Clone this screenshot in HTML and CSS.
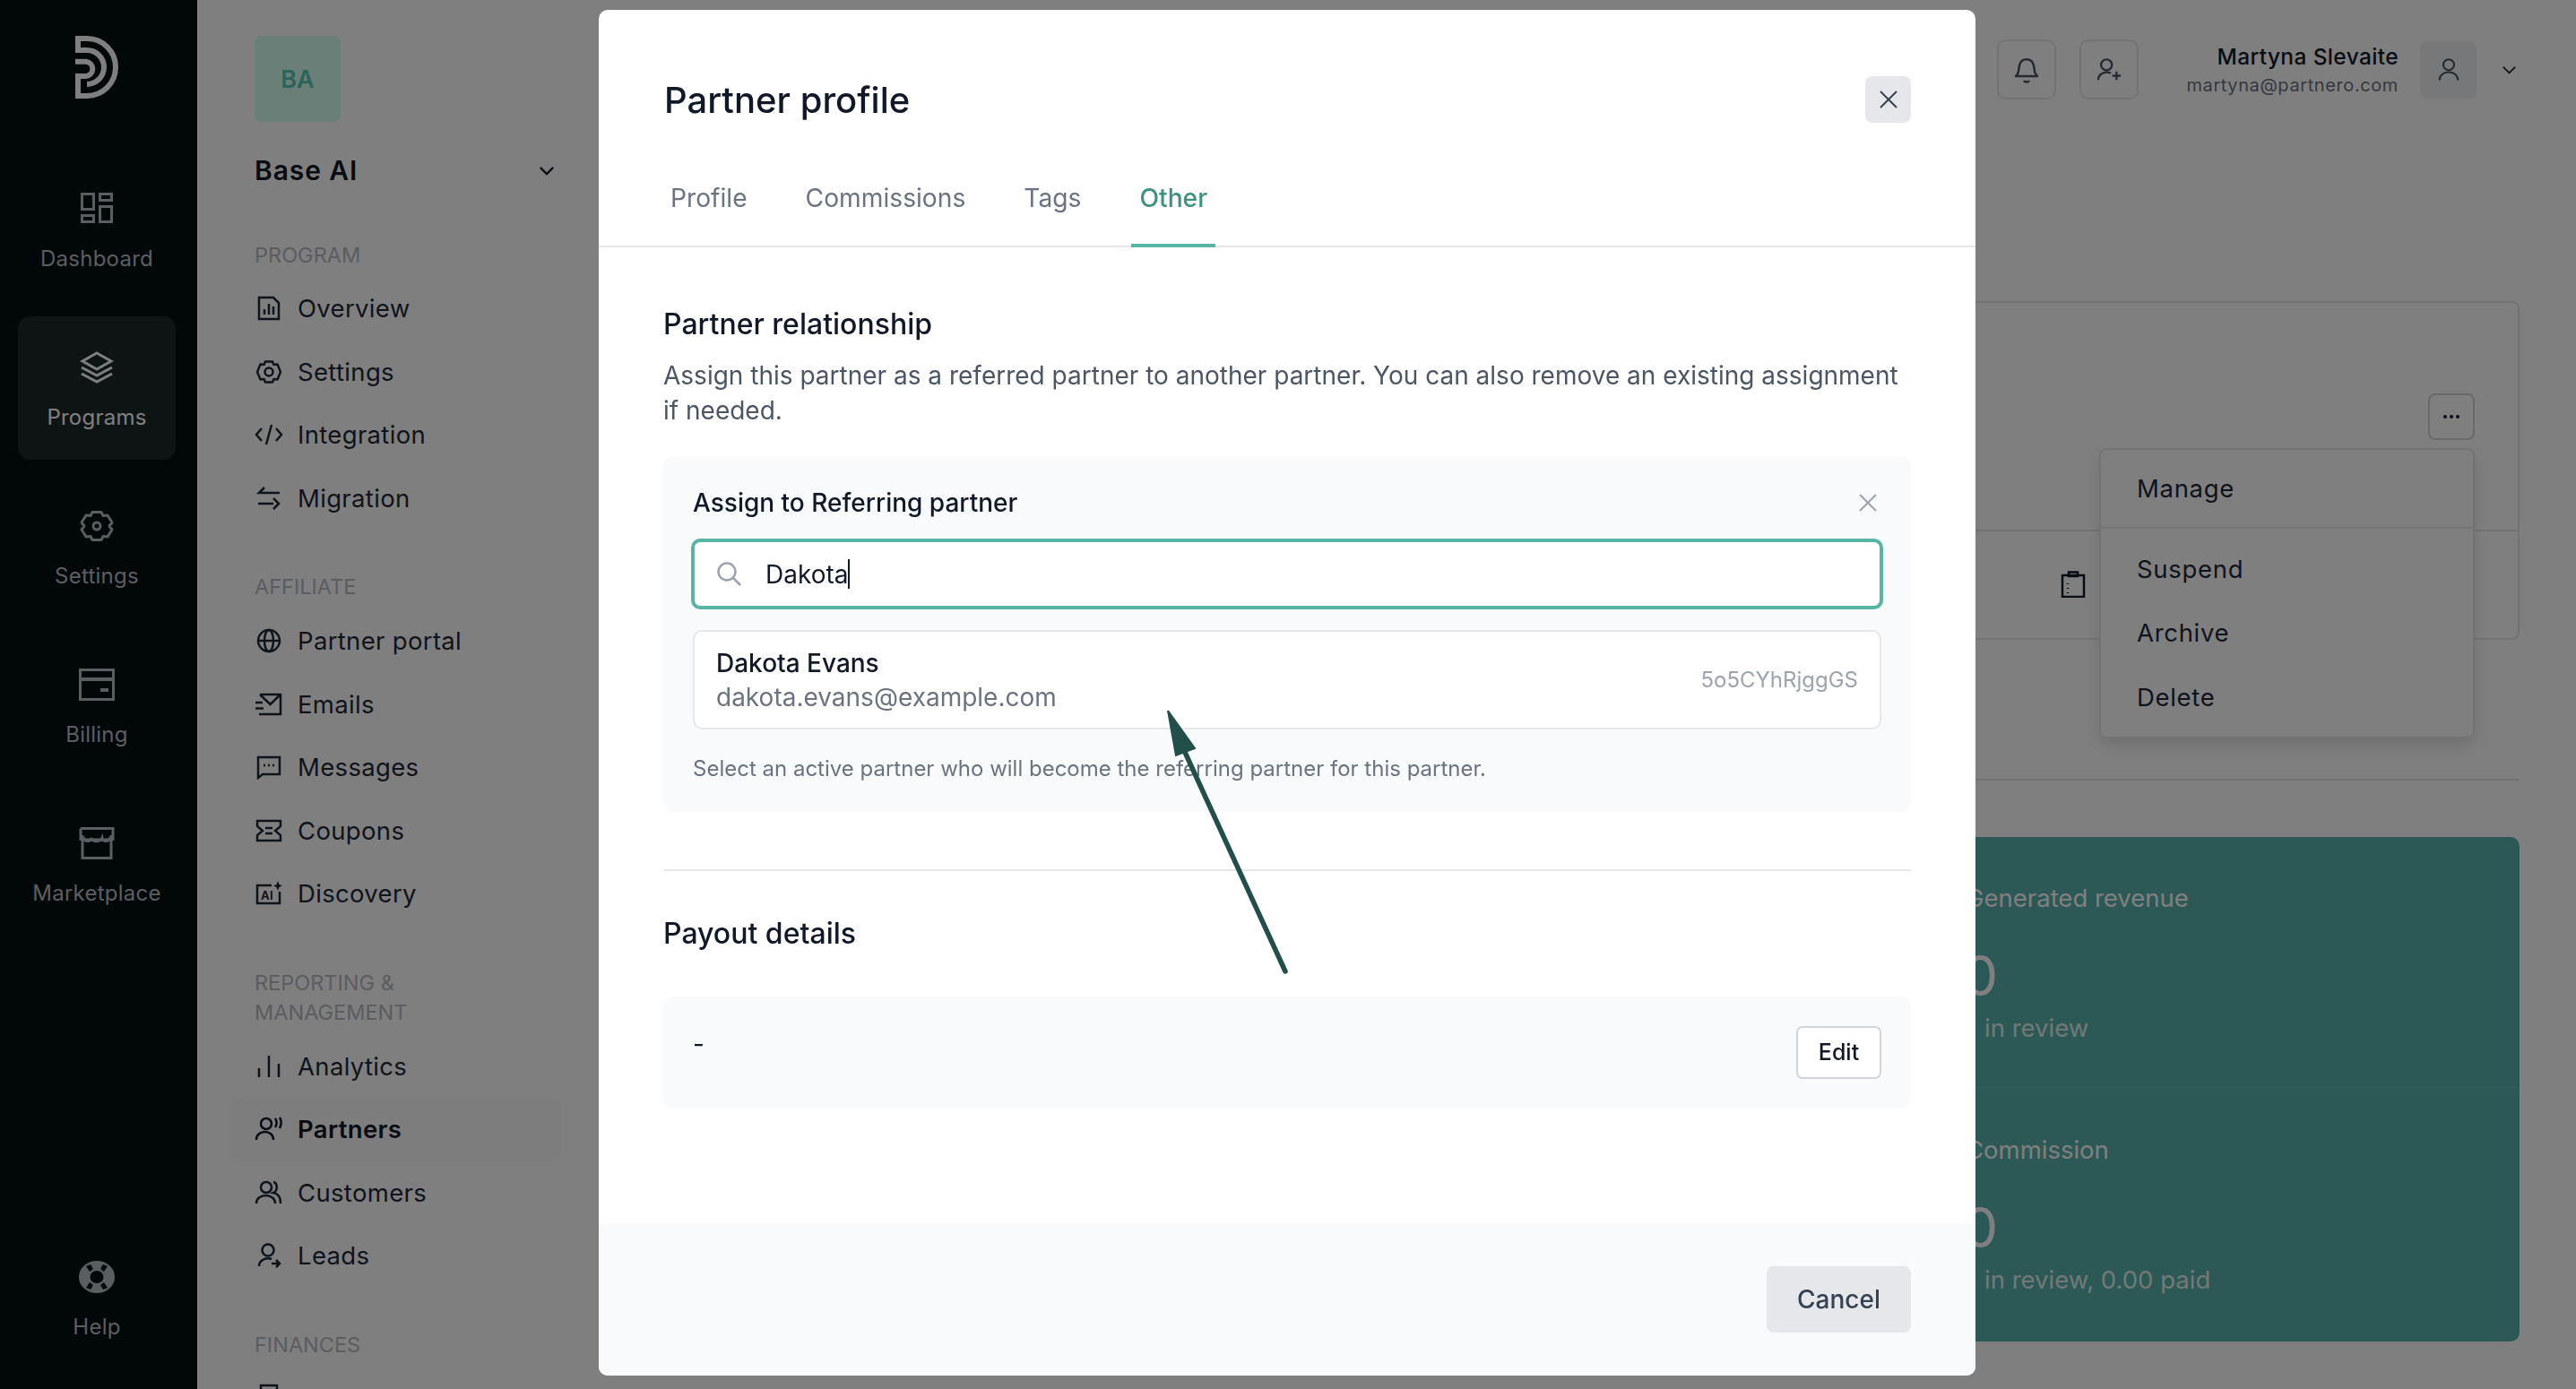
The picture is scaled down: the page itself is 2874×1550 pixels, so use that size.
FILE: index.html
```html
<!DOCTYPE html>
<html>
<head>
    <meta charset="utf-8">
    <title>Partner profile</title>
    <link rel="stylesheet" href="styles.css">
</head>
<body>
    <div class="app">
        <!-- dark icon rail -->
        <aside class="rail">
            <svg class="logo" viewBox="0 0 48 70" fill="none" stroke="currentColor" stroke-width="6">
                <path d="M13 54A19 19 0 0 0 13 16H3V3H13A32 32 0 0 1 13 67H3V45H12A8.200 8.200 0 0 0 12 28.700H0"/>
            </svg>
            <a class="rail-item">
                <svg viewBox="0 0 36 36" fill="none" stroke="currentColor" stroke-width="3"><rect x="1.5" y="1.5" width="13" height="17"/><rect x="21.5" y="1.5" width="13" height="7"/><rect x="1.5" y="25.5" width="13" height="7"/><rect x="21.5" y="15.5" width="13" height="17"/></svg>
                <span>Dashboard</span>
            </a>
            <a class="rail-item active">
                <svg viewBox="0 0 38 36" fill="none" stroke="currentColor" stroke-width="3"><path d="M19 2L35 11L19 20L3 11Z"/><path d="M2 18L19 27L36 18"/><path d="M2 25L19 34L36 25"/></svg>
                <span>Programs</span>
            </a>
            <a class="rail-item">
                <svg viewBox="0 0 38 36" fill="none" stroke="currentColor" stroke-width="3"><path d="M14 2.500H24L26 6.500L31 6L36 14L33 18L36 22L31 30L26 29.500L24 33.500H14L12 29.500L7 30L2 22L5 18L2 14L7 6L12 6.500Z" stroke-linejoin="round"/><circle cx="19" cy="18" r="4"/></svg>
                <span>Settings</span>
            </a>
            <a class="rail-item">
                <svg viewBox="0 0 40 36" fill="none" stroke="currentColor" stroke-width="3"><rect x="1.500" y="1.500" width="37" height="33"/><path d="M2 12H38" stroke-width="4"/><path d="M24 24H33" stroke-width="4"/></svg>
                <span>Billing</span>
            </a>
            <a class="rail-item">
                <svg viewBox="0 0 40 36" fill="none" stroke="currentColor" stroke-width="3"><path d="M2 1.500H38V15M2 1.500V15"/><path d="M4 34.500H36V14H4Z"/><path d="M5 11C6 17 13 17 14 12C15 17 24 17 26 12C27 17 34 17 35 11" stroke-width="3"/><path d="M4 9V15M36 9V15"/></svg>
                <span>Marketplace</span>
            </a>
            <a class="rail-item help">
                <svg viewBox="0 0 40 36" fill="currentColor"><ellipse cx="20" cy="18" rx="20" ry="18"/><ellipse cx="20" cy="18" rx="7.500" ry="7" fill="#050f11"/><path d="M8 6L13 4L16 9L12 12Z M32 6L27 4L24 9L28 12Z M8 30L13 32L16 27L12 24Z M32 30L27 32L24 27L28 24Z" fill="#050f11"/></svg>
                <span>Help</span>
            </a>
        </aside>

        <!-- program sub navigation -->
        <nav class="subnav">
            <div class="program-badge">BA</div>
            <div class="program-name">
                <span>Base AI</span>
                <svg viewBox="0 0 20 12" fill="none" stroke="currentColor" stroke-width="2.500"><path d="M2 2L10 10L18 2"/></svg>
            </div>

            <h4 class="nav-heading">PROGRAM</h4>
            <a class="nav-item"><svg viewBox="0 0 28 28" fill="none" stroke="currentColor" stroke-width="2.500"><path d="M3 2H19L25 8V26H3Z"/><path d="M9 21V15M14 21V9M19 21V12"/></svg>Overview</a>
            <a class="nav-item"><svg viewBox="0 0 28 28" fill="none" stroke="currentColor" stroke-width="2.500"><path d="M10 2.500H18L19.500 6L23.500 5.500L27 14L23.500 22.500L19.500 22L18 25.500H10L8.500 22L4.500 22.500L1 14L4.500 5.500L8.500 6Z" stroke-linejoin="round"/><circle cx="14" cy="14" r="4.500"/></svg>Settings</a>
            <a class="nav-item"><svg viewBox="0 0 32 28" fill="none" stroke="currentColor" stroke-width="2.500"><path d="M8 7L2 14L8 21M24 7L30 14L24 21M19 3L13 25"/></svg>Integration</a>
            <a class="nav-item"><svg viewBox="0 0 28 28" fill="none" stroke="currentColor" stroke-width="2.500"><path d="M9 2L3 8H26M19 20H2M19 14L25 20L19 26" /></svg>Migration</a>

            <h4 class="nav-heading second">AFFILIATE</h4>
            <a class="nav-item"><svg viewBox="0 0 28 28" fill="none" stroke="currentColor" stroke-width="2.500"><circle cx="14" cy="14" r="12"/><ellipse cx="14" cy="14" rx="5" ry="12"/><path d="M2 14H26"/></svg>Partner portal</a>
            <a class="nav-item"><svg viewBox="0 0 30 28" fill="none" stroke="currentColor" stroke-width="2.500"><path d="M5 3H28V25H4M5 3L16.500 14L28 3M0 12H8M0 18.500H9"/></svg>Emails</a>
            <a class="nav-item"><svg viewBox="0 0 28 28" fill="none" stroke="currentColor" stroke-width="2.500"><path d="M2 3H26V22H7L2 26Z"/><path d="M8 12H10M13 12H15M18 12H20"/></svg>Messages</a>
            <a class="nav-item"><svg viewBox="0 0 30 28" fill="none" stroke="currentColor" stroke-width="2.500"><path d="M2 3H28V9L22 14L28 19V25H2V19L8 14L2 9Z"/><path d="M11 11H19M11 17H19"/></svg>Coupons</a>
            <a class="nav-item"><svg viewBox="0 0 30 28" fill="none" stroke="currentColor" stroke-width="2.500"><path d="M18 5H2V25H27V12"/><text class="ai-mark" x="6" y="21">AI</text><path d="M25 0L26.500 4L30 5.500L26.500 7L25 11L23.500 7L20 5.500L23.500 4Z" fill="currentColor" stroke="none"/></svg>Discovery</a>

            <h4 class="nav-heading second">REPORTING &amp; MANAGEMENT</h4>
            <a class="nav-item"><svg viewBox="0 0 28 28" fill="none" stroke="currentColor" stroke-width="2.500"><path d="M3 26V16M14 26V2M25 26V11"/></svg>Analytics</a>
            <a class="nav-item current"><svg viewBox="0 0 30 28" fill="none" stroke="currentColor" stroke-width="2.500"><circle cx="12" cy="8" r="6"/><path d="M1 26C1 14 20 14 20 26"/><path d="M22 2C24 5 24 9 22 12M27 1C29 4 29 9 27 13"/></svg>Partners</a>
            <a class="nav-item"><svg viewBox="0 0 30 28" fill="none" stroke="currentColor" stroke-width="2.500"><circle cx="12" cy="8" r="6"/><path d="M1 26C1 14 22 14 22 26"/><path d="M20 2C25 3 25 12 20 14C26 15 28 20 28 26"/></svg>Customers</a>
            <a class="nav-item"><svg viewBox="0 0 28 28" fill="none" stroke="currentColor" stroke-width="2.500"><circle cx="13" cy="8" r="6.500"/><path d="M3 26C3 19 11 16 17 18M17 23H26M22 19L26 23L22 27"/></svg>Leads</a>

            <h4 class="nav-heading second">FINANCES</h4>
            <div class="nav-peek"><svg viewBox="0 0 28 28" fill="none" stroke="currentColor" stroke-width="2.500"><path d="M5 2H23V26H5Z"/></svg></div>
        </nav>

        <!-- page behind the modal -->
        <main class="main">
            <header class="topbar">
                <button class="icon-btn"><svg viewBox="0 0 28 30" fill="none" stroke="currentColor" stroke-width="2.500"><path d="M2 22H26C22 19 23 14 22 10C20 1 8 1 6 10C5 14 6 19 2 22Z" stroke-linejoin="round"/><path d="M11 27C12 29 16 29 17 27"/></svg></button>
                <button class="icon-btn"><svg viewBox="0 0 30 30" fill="none" stroke="currentColor" stroke-width="2.500"><circle cx="12" cy="9" r="6.500"/><path d="M2 27C2 19 12 16 17 19M19 22H29M24 17V27"/></svg></button>
                <div class="user">
                    <div class="user-name">Martyna Slevaite</div>
                    <div class="user-mail">martyna@partnero.com</div>
                </div>
                <div class="avatar"><svg viewBox="0 0 28 30" fill="none" stroke="currentColor" stroke-width="2.500"><circle cx="14" cy="9" r="7"/><path d="M2 29C2 15 26 15 26 29"/></svg></div>
                <svg class="chevron" viewBox="0 0 20 12" fill="none" stroke="currentColor" stroke-width="2"><path d="M2 2L10 10L18 2"/></svg>
            </header>

            <section class="card">
                <div class="card-top">
                    <button class="more-btn"><i></i><i></i><i></i></button>
                </div>
                <div class="card-foot">
                    <svg viewBox="0 0 28 30" fill="none" stroke="currentColor" stroke-width="2.500"><path d="M2 5H26V29H2Z"/><path d="M9 1.500H19V6H9Z"/><path d="M8 14V15M8 19V20M8 24V25"/></svg>
                </div>
                <div class="menu">
                    <a class="menu-item first">Manage</a>
                    <div class="menu-list">
                        <a class="menu-item">Suspend</a>
                        <a class="menu-item">Archive</a>
                        <a class="menu-item">Delete</a>
                    </div>
                </div>
            </section>

            <hr class="rule">

            <section class="stats">
                <div class="stat">
                    <div class="stat-label">Generated revenue</div>
                    <div class="stat-value">0.00</div>
                    <div class="stat-sub">0.00&nbsp; in review</div>
                </div>
                <div class="stat">
                    <div class="stat-label">Commission</div>
                    <div class="stat-value">0.00</div>
                    <div class="stat-sub">0.00&nbsp; in review, 0.00 paid</div>
                </div>
            </section>
        </main>
    </div>

    <div class="overlay"></div>

    <div class="modal">
        <div class="modal-head">
            <h2>Partner profile</h2>
            <button class="close-btn"><svg viewBox="0 0 20 20" fill="none" stroke="currentColor" stroke-width="2"><path d="M1 1L19 19M19 1L1 19"/></svg></button>
        </div>
        <div class="tabs">
            <a class="tab">Profile</a>
            <a class="tab">Commissions</a>
            <a class="tab">Tags</a>
            <a class="tab selected">Other</a>
        </div>
        <div class="modal-body">
            <h3>Partner relationship</h3>
            <p class="lead">Assign this partner as a referred partner to another partner. You can also remove an existing assignment if needed.</p>

            <div class="assign">
                <div class="assign-head">
                    <span>Assign to Referring partner</span>
                    <svg viewBox="0 0 20 20" fill="none" stroke="currentColor" stroke-width="2"><path d="M1 1L19 19M19 1L1 19"/></svg>
                </div>
                <div class="search">
                    <svg viewBox="0 0 28 27" fill="none" stroke="currentColor" stroke-width="2.500"><circle cx="12" cy="11" r="9.500"/><path d="M19 18L27 26"/></svg>
                    <span>Dakota</span><i class="caret"></i>
                </div>
                <div class="result">
                    <div>
                        <div class="result-name">Dakota Evans</div>
                        <div class="result-mail">dakota.evans@example.com</div>
                    </div>
                    <div class="result-id">5o5CYhRjggGS</div>
                </div>
                <p class="hint">Select an active partner who will become the referring partner for this partner.</p>
            </div>

            <hr class="modal-rule">

            <h3>Payout details</h3>
            <div class="payout">
                <span>-</span>
                <button class="edit-btn">Edit</button>
            </div>
        </div>
        <div class="modal-foot">
            <button class="cancel-btn">Cancel</button>
        </div>
    </div>

    <!-- annotation arrow drawn on top of the screenshot -->
    <svg class="arrow" viewBox="0 0 2874 1550" fill="none">
        <path d="M1434 1084L1320 835" stroke="#234f4b" stroke-width="5.500" stroke-linecap="round"/>
        <path d="M1303 793L1312 843L1333 835Z" fill="#234f4b" stroke="#234f4b" stroke-width="2"/>
    </svg>
</body>
</html>
```

FILE: styles.css
```css
* {
    box-sizing: border-box;
}

:root {
    --ink:      #111827;
    --nav-ink:  #1f2937;
    --grey:     #6b7280;
    --light:    #9ca3af;
    --line:     #e5e7eb;
    --soft:     #f9fafb;
    --teal:     #58b5a4;
}

html, body {
    margin: 0;
    height: 100%;
    overflow: hidden;
    font-family: "Inter", "Liberation Sans", sans-serif;
    color: var(--ink);
    background: #fff;
}

button {
    font-family: inherit;
    padding: 0;
    border: none;
}

h2, h3, h4, p {
    margin: 0;
    font-weight: 500;
}

.app {
    display: flex;
    height: 1550px;
}

/* rail */
.rail {
    width: 220px;
    flex: none;
    display: flex;
    flex-direction: column;
    align-items: center;
    padding: 40px 4px 0 0;
    background: #050f11;
    color: #b6bcc2;
}

.logo {
    width: 48px;
    height: 70px;
    margin-bottom: 66px;
    color: #fff;
}

.rail-item {
    width: 176px;
    height: 160px;
    margin-bottom: 17px;
    display: flex;
    flex-direction: column;
    align-items: center;
    gap: 23px;
    padding-top: 39px;
    border-radius: 14px;
    font-size: 24px;
    letter-spacing: 0.01em;
    line-height: 30px;
}

.rail-item svg {
    height: 36px;
    width: 40px;
}

.rail-item.active {
    background: #1d2829;
    color: #fff;
}

.rail-item.help {
    margin-top: auto;
    margin-bottom: 22px;
}

/* sub navigation */
.subnav {
    width: 440px;
    flex: none;
    padding: 40px 34px 0 64px;
    color: var(--nav-ink);
    overflow: hidden;
}

.program-badge {
    width: 96px;
    height: 96px;
    display: flex;
    align-items: center;
    justify-content: center;
    border-radius: 8px;
    background: #d4fff0;
    color: #58caae;
    font-size: 27px;
    font-weight: 600;
}

.program-name {
    display: flex;
    align-items: center;
    justify-content: space-between;
    margin-top: 32px;
    padding-right: 7px;
    font-size: 30px;
    font-weight: 600;
    letter-spacing: 0.03em;
    color: var(--ink);
    line-height: 44px;
}

.program-name svg {
    width: 18px;
    height: 11px;
}

.nav-heading {
    margin-top: 56px;
    margin-bottom: 8px;
    padding-right: 60px;
    font-size: 23.5px;
    line-height: 33px;
    font-weight: 400;
    color: #b6bac2;
}

.nav-heading.second {
    margin-top: 47px;
    margin-bottom: 9px;
}

.nav-item {
    display: flex;
    align-items: center;
    gap: 16px;
    height: 70.5px;
    margin-left: -24px;
    padding-left: 24px;
    font-size: 27.5px;
    letter-spacing: 0.012em;
    border-radius: 10px;
}

.nav-item svg,
.nav-peek svg {
    width: 32px;
    height: 28px;
    flex: none;
}

.nav-item.current {
    background: #fafafa;
    font-weight: 600;
    color: var(--ink);
}

.nav-peek {
    padding-top: 18px;
}

/* page behind modal */
.main {
    flex: 1;
    min-width: 0;
    padding: 44px 63px 0 40px;
}

.topbar {
    display: flex;
    align-items: center;
    justify-content: flex-end;
    height: 67px;
}

.icon-btn {
    width: 66px;
    height: 67px;
    margin-right: 26px;
    display: flex;
    align-items: center;
    justify-content: center;
    background: #fff;
    border: 2px solid var(--line);
    border-radius: 10px;
    color: #4b5563;
}

.icon-btn svg {
    width: 28px;
    height: 30px;
}

.user {
    margin-left: 27px;
    text-align: right;
}

.user-name {
    font-size: 24.5px;
    font-weight: 500;
    letter-spacing: 0.015em;
    line-height: 34px;
}

.user-mail {
    font-size: 20px;
    letter-spacing: 0.03em;
    line-height: 30px;
    color: var(--grey);
}

.avatar {
    width: 63px;
    height: 64px;
    margin-left: 24px;
    display: flex;
    align-items: center;
    justify-content: center;
    background: #eef0f2;
    border-radius: 8px;
    color: #4b5563;
}

.avatar svg {
    width: 24px;
    height: 27px;
}

.chevron {
    width: 17px;
    height: 10px;
    margin: 0 3px 0 28px;
    color: var(--ink);
}

.card {
    position: relative;
    height: 378px;
    margin-top: 225px;
    border: 2px solid var(--line);
    border-radius: 8px;
}

.card-top {
    height: 255px;
    padding: 101px 48px 0 0;
    display: flex;
    justify-content: flex-end;
    align-items: flex-start;
    border-bottom: 2px solid var(--line);
}

.more-btn {
    width: 52px;
    height: 52px;
    display: flex;
    align-items: center;
    justify-content: center;
    gap: 3px;
    background: #fff;
    border: 2px solid #d1d5db;
    border-radius: 8px;
}

.more-btn i {
    width: 4px;
    height: 4px;
    border-radius: 50%;
    background: var(--ink);
}

.card-foot {
    display: flex;
    justify-content: flex-end;
    padding: 44px 482px 0 0;
    color: var(--ink);
}

.card-foot svg {
    width: 28px;
    height: 30px;
}

/* the open dropdown */
.menu {
    position: absolute;
    top: 162px;
    right: 48px;
    width: 419px;
    height: 324px;
    background: #fff;
    border: 2px solid var(--line);
    border-radius: 8px;
    box-shadow: 0 8px 18px rgba(0, 0, 0, 0.12);
    font-size: 27.5px;
    letter-spacing: 0.025em;
    color: var(--nav-ink);
}

.menu-item {
    display: flex;
    align-items: center;
    height: 71.5px;
    padding-left: 40px;
}

.menu-item.first {
    height: 88px;
    border-bottom: 2px solid var(--line);
}

.menu-list {
    padding-top: 9px;
}

.rule {
    height: 2px;
    margin: 155px 0 0;
    border: none;
    background: var(--line);
}

.stats {
    height: 563px;
    margin: 63px 0 0 auto;
    width: 640px;
    background: #59b2aa;
    border-radius: 0 10px 10px 0;
    color: #fff;
}

.stat {
    height: 281px;
    padding: 48px 0 0 22px;
    border-bottom: 2px solid #5cb8b0;
}

.stat:last-child {
    border: none;
}

.stat-label {
    font-size: 27.5px;
    line-height: 40px;
}

.stat-value {
    margin: 30px 0 0 -96px;
    font-size: 62px;
    line-height: 74px;
}

.stat-sub {
    margin: 1px 0 0 -53px;
    font-size: 27.5px;
    line-height: 40px;
    color: #e0f3ef;
}

.overlay {
    position: fixed;
    inset: 0;
    background: rgba(0, 0, 0, 0.5);
}

/* modal */
.modal {
    position: fixed;
    top: 11px;
    left: 668px;
    width: 1536px;
    height: 1524px;
    display: flex;
    flex-direction: column;
    background: #fff;
    border-radius: 10px;
    overflow: hidden;
}

.modal-head {
    display: flex;
    align-items: center;
    justify-content: space-between;
    padding: 73px 72px 0 73px;
}

.modal-head h2 {
    padding-top: 2px;
    font-size: 40px;
    line-height: 52px;
}

.close-btn {
    width: 51px;
    height: 52px;
    display: flex;
    align-items: center;
    justify-content: center;
    background: var(--line);
    border-radius: 8px;
    color: #374151;
}

.close-btn svg {
    width: 20px;
    height: 20px;
}

.tabs {
    display: flex;
    gap: 47px;
    margin-top: 62px;
    padding-left: 71px;
    border-bottom: 2px solid var(--line);
}

.tab {
    padding: 0 9px 30px;
    margin-bottom: -2px;
    border-bottom: 4px solid transparent;
    font-size: 28.2px;
    line-height: 42px;
    color: var(--grey);
}

.tab.selected {
    color: #3f9180;
    font-weight: 500;
    border-bottom-color: var(--teal);
}

.modal-body {
    padding: 66px 72px 0 72px;
}

.modal-body h3 {
    font-size: 32px;
    line-height: 40px;
}

.lead {
    margin-top: 18px;
    font-size: 28px;
    font-weight: 400;
    line-height: 39px;
    color: #4b5563;
}

.assign {
    margin-top: 31px;
    padding: 32px 33px 30px;
    background: var(--soft);
    border-radius: 12px;
}

.assign-head {
    display: flex;
    align-items: center;
    justify-content: space-between;
    padding-right: 5px;
    font-size: 28px;
    font-weight: 500;
    line-height: 40px;
}

.assign-head svg {
    width: 20px;
    height: 20px;
    color: var(--light);
}

.search {
    display: flex;
    align-items: center;
    height: 75px;
    margin-top: 22px;
    padding-left: 24px;
    background: #fff;
    border: 2px solid var(--teal);
    border-radius: 8px;
    box-shadow: 0 0 0 2px var(--teal);
    font-size: 28px;
}

.search svg {
    width: 28px;
    height: 27px;
    margin-right: 27px;
    color: var(--light);
}

.caret {
    width: 2px;
    height: 33px;
    background: var(--ink);
}

.result {
    display: flex;
    align-items: center;
    justify-content: space-between;
    height: 111px;
    margin-top: 25px;
    padding: 0 24px;
    background: #fff;
    border: 2px solid var(--line);
    border-radius: 10px;
}

.result-name {
    font-size: 28px;
    font-weight: 500;
    line-height: 38px;
}

.result-mail {
    font-size: 28px;
    line-height: 38px;
    color: var(--grey);
}

.result-id {
    font-size: 24px;
    color: var(--light);
}

.hint {
    margin-top: 26px;
    font-size: 24px;
    font-weight: 400;
    line-height: 36px;
    color: var(--grey);
}

.modal-rule {
    height: 2px;
    margin: 64px 0 50px;
    border: none;
    background: var(--line);
}

.payout {
    display: flex;
    align-items: center;
    justify-content: space-between;
    height: 124px;
    margin-top: 50px;
    padding: 0 33px;
    background: var(--soft);
    border-radius: 10px;
}

.payout span {
    align-self: flex-start;
    margin-top: 33px;
    font-size: 28px;
    line-height: 40px;
}

.edit-btn {
    width: 95px;
    height: 59px;
    background: #fff;
    border: 2px solid #d1d5db;
    border-radius: 7px;
    font-size: 25px;
    font-weight: 500;
    color: var(--ink);
}

.modal-foot {
    display: flex;
    justify-content: flex-end;
    height: 170px;
    margin-top: auto;
    padding: 48px 72px 0 0;
    background: var(--soft);
}

.cancel-btn {
    width: 161px;
    height: 74px;
    background: var(--line);
    border-radius: 8px;
    font-size: 28px;
    font-weight: 500;
    color: #374151;
}

.arrow {
    position: fixed;
    inset: 0;
    width: 2874px;
    height: 1550px;
    pointer-events: none;
}

.ai-mark {
    font-size: 13px;
    font-weight: 700;
    fill: currentColor;
    stroke: none;
}
```
